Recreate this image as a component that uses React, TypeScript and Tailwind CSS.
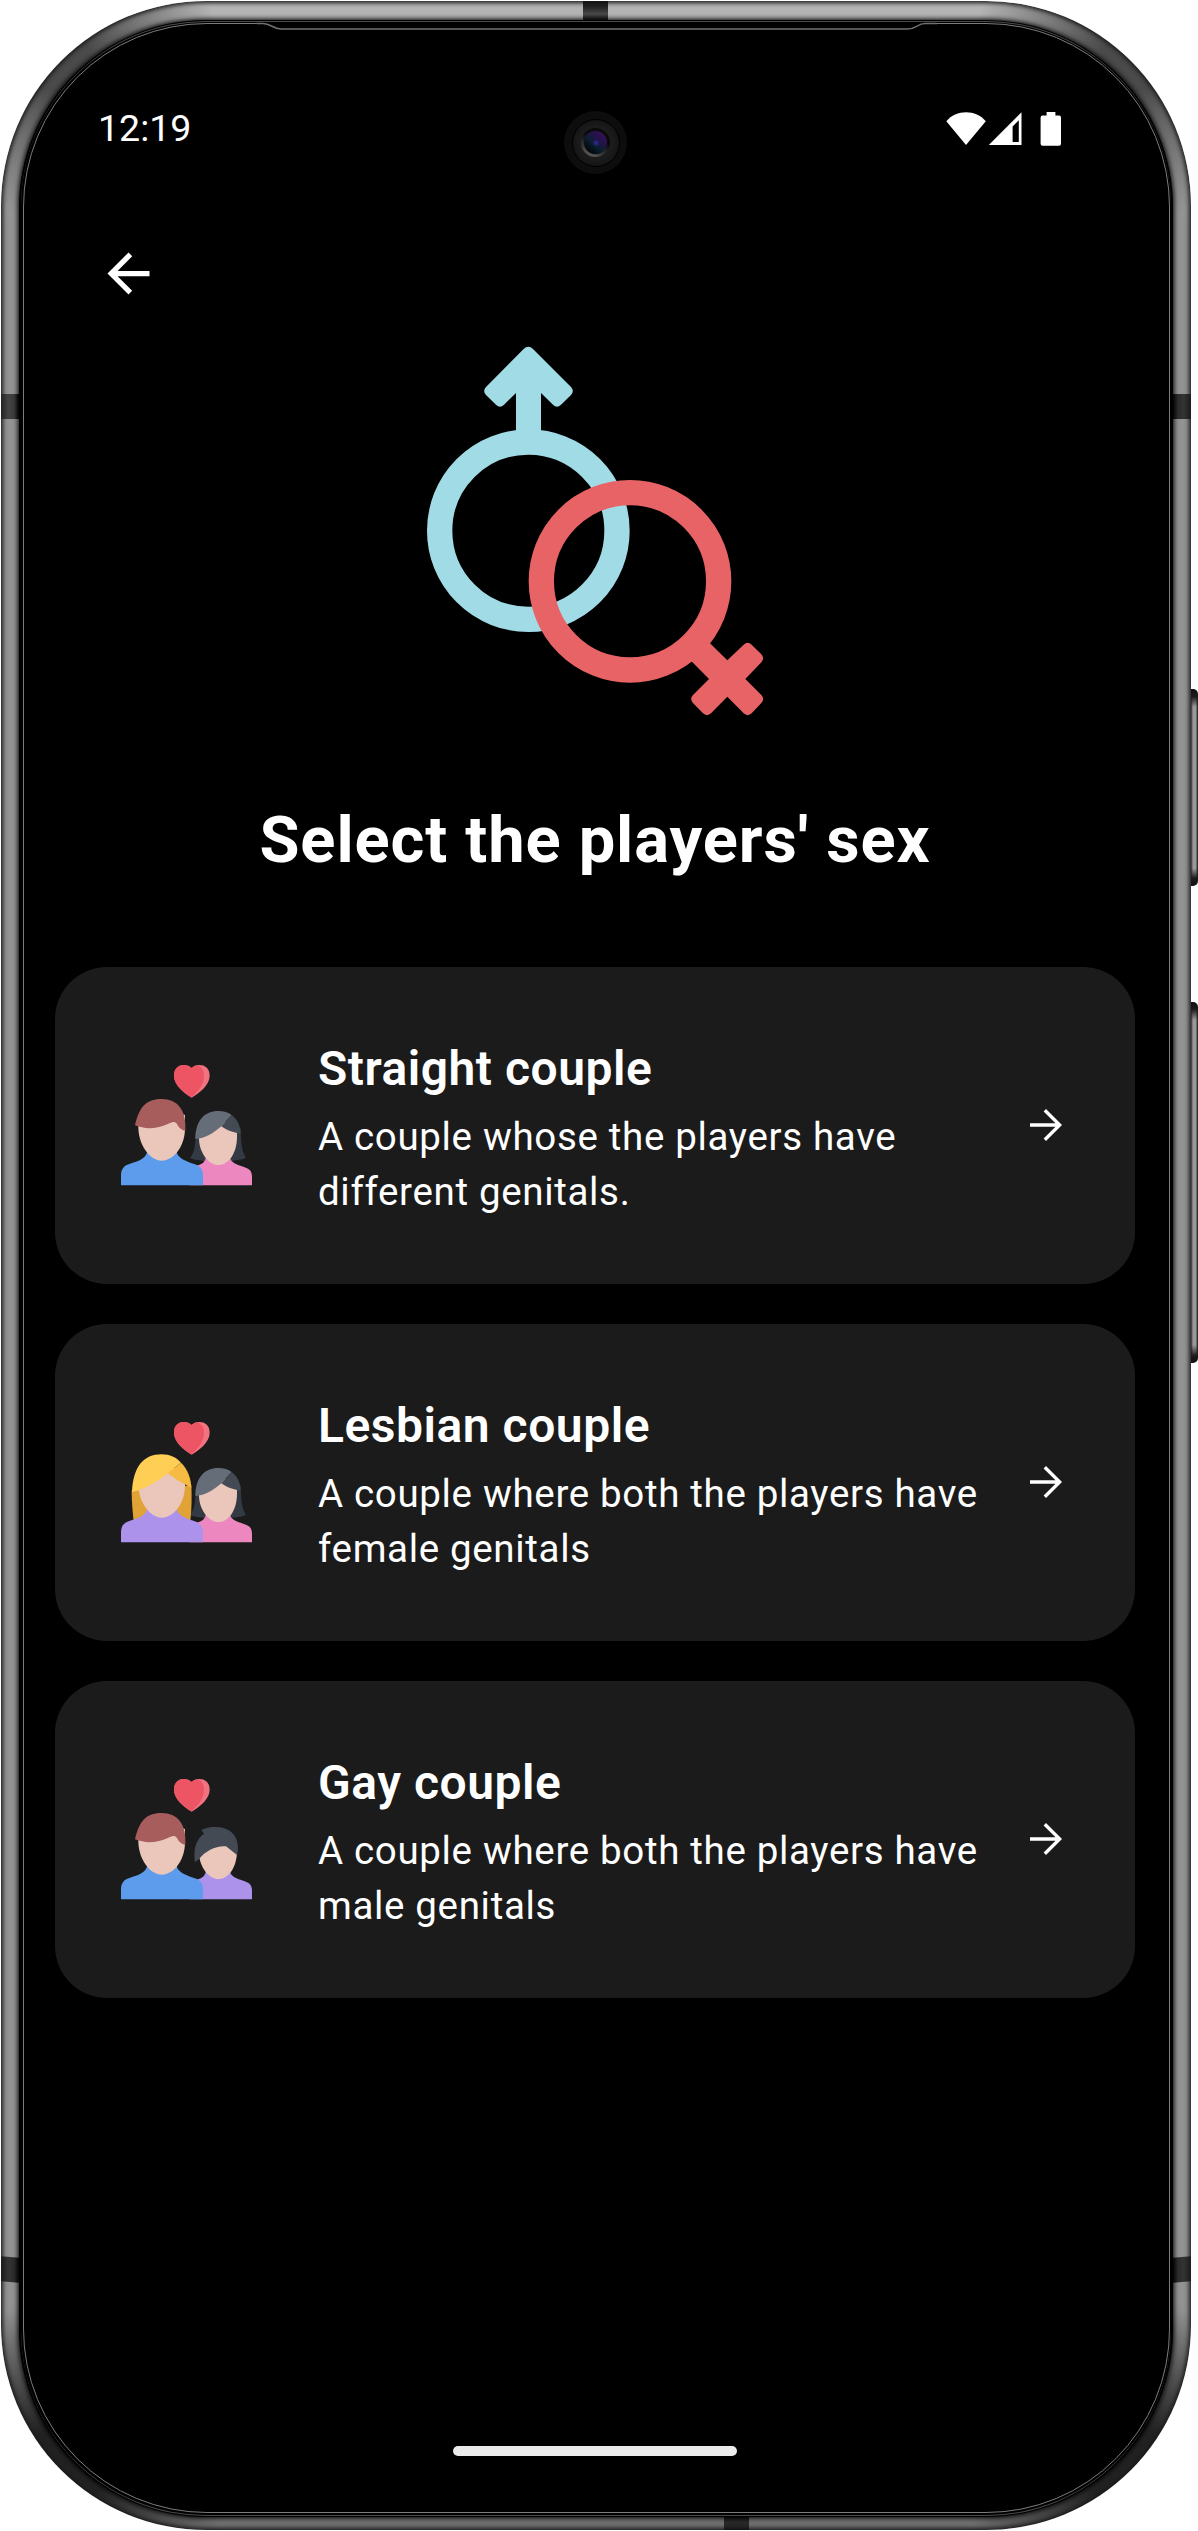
type Couple = 'straight' | 'lesbian' | 'gay';

const options: { kind: Couple; title: string; lines: [string, string] }[] = [
  { kind: 'straight', title: 'Straight couple', lines: ['A couple whose the players have', 'different genitals.'] },
  { kind: 'lesbian', title: 'Lesbian couple', lines: ['A couple where both the players have', 'female genitals'] },
  { kind: 'gay', title: 'Gay couple', lines: ['A couple where both the players have', 'male genitals'] },
];

function CoupleIcon({ kind }: { kind: Couple }) {
  const frontBody = kind === 'lesbian' ? '#ac92eb' : '#5d9cec';
  const backBody = kind === 'gay' ? '#ac92eb' : '#ec87c0';
  return (
    <svg viewBox="93 60 393 393" className="h-[131px] w-[131px] shrink-0">
      {kind !== 'gay' && (
        <path d="M317 275C317 320 312 340 300 354C325 368 440 368 468 353C456 338 453 310 452 265Z" fill="#333a43" />
      )}
      <path d="M300 436V376H325C341 370 348 362 348 345H420V352C422 368 440 374 462 381C478 386 486 393 486 410V436Z" fill={backBody} />
      <path d="M327 290C325 335 355 375 385 375C415 375 441 340 441 290V265L394 240L335 270Z" fill="#eac6bb" />
      {kind === 'gay' ? (
        <path d="M315 325C310 290 315 258 342 239L334 228C350 220 362 219 375 219C420 219 444 243 444 283L442 304L408 277C380 274 345 291 328 314Z" fill="#434a54" />
      ) : (
        <>
          <path d="M316 297C316 240 345 213 384 213C402 213 415 217 425 225L394 259C370 280 345 295 316 297Z" fill="#656d78" />
          <path d="M425 225C445 240 451 260 452 281C430 278 408 270 394 259Z" fill="#434a54" />
        </>
      )}
      {kind === 'lesbian' && <path d="M125 280C125 315 128 350 132 380H300C304 350 306 310 304 265Z" fill="#e2a336" />}
      <path d="M93 436V407C93 385 103 376 120 371C150 362 170 352 171 335H260C262 352 285 363 310 371C330 377 339 387 339 407V436Z" fill={frontBody} />
      <path d="M145 255C143 315 180 362 215 362C252 362 285 318 285 265V225L215 200L150 235Z" fill="#eac6bb" />
      {kind === 'lesbian' ? (
        <>
          <path d="M126 285C130 209 160 172 215 172C240 172 258 181 273 197L233 229C205 252 165 277 126 285Z" fill="#ffce54" />
          <path d="M273 197C293 216 303 244 304 272C280 261 255 246 233 229Z" fill="#f6bb42" />
        </>
      ) : (
        <path d="M135 256C147 205 165 177 215 177C262 177 291 210 286 273C275 270 265 263 261 252C253 240 243 248 228 254C198 267 165 268 135 256Z" fill="#a85d5d" />
      )}
      <path d="M305 173C325 160 359 137 359 107C359 72 322 68 305 84C288 68 252 72 252 107C252 137 285 160 305 173Z" fill="#f27380" />
      <path d="M303 172C322 158 342 135 342 105C342 90 334 80 320 76C314 77 309 80 305 84C288 68 252 72 252 107C252 137 285 160 303 172Z" fill="#ed5564" />
    </svg>
  );
}

function SexSymbols() {
  return (
    <svg viewBox="0 0 1200 1260" className="h-[420px] w-[400px] self-start">
      <g fill="#a1dce6">
        <path d="M371 87Q385 74 399 87L513 201Q524 213 513 225L483 254Q471 266 459 254L423 219V345H348V219L312 254Q300 266 288 254L258 225Q247 213 258 201Z" />
        <circle cx="385" cy="632" r="266" fill="none" stroke="#a1dce6" strokeWidth="76" />
      </g>
      <g fill="#e86365">
        <circle cx="690" cy="784" r="266" fill="none" stroke="#e86365" strokeWidth="76" />
        <path d="M930 970L982 1021L1031 974Q1043 963 1055 974L1084 1003Q1095 1015 1084 1027L1036 1077L1084 1125Q1095 1137 1084 1149L1055 1180Q1043 1191 1031 1180L982 1130L933 1180Q921 1191 909 1180L879 1149Q868 1137 879 1125L927 1077L870 1019L895 960Z" />
      </g>
    </svg>
  );
}

function StatusIcons() {
  return (
    <svg viewBox="948 111 116 36" className="h-[36px] w-[116px]" fill="#fff">
      <path d="M948.3 121.2C958 109.2 978 109.2 987.8 121.2L968 145Z" />
      <path fillRule="evenodd" d="M990.8 145L1023.5 112.3V145ZM1014.6 126.5V142H1020.8V120.3Z" />
      <path d="M1048.6 112H1057.4V115.5H1061Q1063 115.5 1063 117.5V143.7Q1063 145.7 1061 145.7H1044.6Q1042.6 145.7 1042.6 143.7V117.5Q1042.6 115.5 1044.6 115.5H1048.6Z" />
    </svg>
  );
}

function Camera() {
  return (
    <div className="absolute left-[563px] top-[110px] flex h-[63px] w-[63px] items-center justify-center rounded-full bg-[#0d0d0d]">
      <div className="flex h-[48px] w-[48px] items-center justify-center rounded-full border border-black bg-[radial-gradient(circle,#1c1c1c_50%,#0c0c0c_100%)]">
        <div className="flex h-[29px] w-[29px] items-center justify-center rounded-full bg-[linear-gradient(25deg,#777_0%,#333_30%,#0a0a0a_60%)]">
          <div className="flex h-[23px] w-[23px] items-center justify-center rounded-full bg-[linear-gradient(40deg,#020608_15%,#0c1f33_45%,#2b1050_70%,#3a1452_100%)]">
            <div className="h-[4px] w-[4px] rounded-full bg-[#3b2fb5] blur-[1px]" />
          </div>
        </div>
      </div>
    </div>
  );
}

function Bezel() {
  return (
    <>
      <div className="absolute left-0 top-[393px] h-[25px] w-[18px] bg-[linear-gradient(90deg,#222,#444_40%,#3a3a3a_75%,#111)]" />
      <div className="absolute right-0 top-[393px] h-[25px] w-[18px] bg-[linear-gradient(270deg,#1a1a1a,#333_40%,#2c2c2c_75%,#111)]" />
      <div className="absolute left-0 top-[2256px] h-[25px] w-[18px] skew-y-[4deg] bg-[linear-gradient(90deg,#1a1a1a,#333_40%,#2c2c2c_75%,#111)]" />
      <div className="absolute right-0 top-[2256px] h-[25px] w-[18px] -skew-y-[4deg] bg-[linear-gradient(270deg,#1a1a1a,#333_40%,#2c2c2c_75%,#111)]" />
      <div className="absolute left-[582px] top-0 h-[20px] w-[25px] bg-[linear-gradient(180deg,#111,#222_30%,#4a4a4a_65%,#151515)]" />
      <div className="absolute bottom-0 left-[723px] h-[16px] w-[25px] bg-[linear-gradient(180deg,#0a0a0a,#2a2a2a_50%,#222_80%,#111)]" />
      <div className="absolute inset-x-[18px] bottom-[13px] top-[19px] rounded-[187px] bg-black shadow-[0_0_5px_1px_#000]" />
      <div className="absolute inset-x-[20px] bottom-[14px] top-[20px] rounded-[185px] border-y border-[#4a4a4a]" />
      <div className="absolute bottom-[17px] left-[22px] right-[21px] top-[22px] rounded-[184px] border border-[#7c7c7c]" />
      <svg viewBox="0 0 680 10" className="absolute left-[256px] top-[21px] h-[10px] w-[680px]" fill="none">
        <path d="M8 0H670V4H8Z" fill="#000" />
        <path d="M0 1.5H6C14 1.5 16 7 24 7H650C660 7 660 1.5 668 1.5H680" stroke="#707070" strokeWidth="1.5" />
      </svg>
    </>
  );
}

export default function App() {
  return (
    <div className="relative h-[2531px] w-[1198px] overflow-hidden bg-white p-px font-['Roboto',sans-serif] text-white">
      <div className="absolute left-[1189px] top-[689px] h-[197px] w-[8.5px] rounded-r-[5px] bg-[linear-gradient(180deg,#111_0%,#1c1c1c_4%,transparent_9%,transparent_91%,#1c1c1c_96%,#111_100%),linear-gradient(90deg,#222_20%,#999_45%,#999_75%,#111_100%)]" />
      <div className="absolute left-[1189px] top-[1002px] h-[361px] w-[8.5px] rounded-r-[5px] bg-[linear-gradient(180deg,#111_0%,#1c1c1c_2%,transparent_5%,transparent_95%,#1c1c1c_98%,#111_100%),linear-gradient(90deg,#222_20%,#999_45%,#999_75%,#111_100%)]" />
      <div className="relative h-[2529px] w-[1190px] rounded-[205px] bg-[radial-gradient(circle_at_60px_60px,#4a4a4a_0px,#4a4a4a_30px,transparent_160px),radial-gradient(circle_at_1130px_60px,#4a4a4a_0px,#4a4a4a_30px,transparent_160px),radial-gradient(circle_at_65px_2464px,#222_0px,#222_40px,transparent_165px),radial-gradient(circle_at_1125px_2464px,#222_0px,#222_40px,transparent_165px),linear-gradient(180deg,#b4b4b4_0px,#b4b4b4_30px,#929292_220px,#929292_2300px,#707070_2500px)] shadow-[inset_0_0_4px_2px_#1a1a1a]">
        <Bezel />
        <Camera />
        <div className="relative flex h-full flex-col px-[54px]">
          <header className="mt-[98px] flex h-[60px] items-center justify-between pl-[43px] pr-[75px]">
            <span className="pb-[2px] text-[37.5px] leading-[44px]">12:19</span>
            <StatusIcons />
          </header>
          <button className="ml-[42px] mt-[83px] h-[63px] w-[63px]" aria-label="Back">
            <svg viewBox="0 0 24 24" fill="#fff" className="h-full w-full">
              <path d="M20 11H7.83l5.59-5.59L12 4l-8 8 8 8 1.41-1.41L7.83 13H20v-2z" />
            </svg>
          </button>
          <div className="ml-[345px] mt-[15px] h-[420px]">
            <SexSymbols />
          </div>
          <h1 className="mt-[64px] pr-[2px] text-center text-[65px] font-bold leading-[72px] tracking-[0.92px]">Select the players' sex</h1>
          <main className="mt-[91px] flex flex-col gap-[40px]">
            {options.map((o) => (
              <button key={o.kind} className="flex h-[317px] w-[1080px] items-center rounded-[52px] bg-[#1b1b1b] pl-[66px] pr-[65px] text-left">
                <CoupleIcon kind={o.kind} />
                <span className="ml-[66px] flex w-0 flex-1 flex-col pt-[4px]">
                  <span className="text-[48px] font-semibold leading-[66px] tracking-[0.52px]">{o.title}</span>
                  <span className="mt-[7px] whitespace-nowrap text-[38.5px] leading-[55px] tracking-[0.66px]">
                    {o.lines[0]}
                    <br />
                    {o.lines[1]}
                  </span>
                </span>
                <svg viewBox="0 0 24 24" fill="#fff" className="mb-[2px] h-[48px] w-[48px] shrink-0">
                  <path d="M12 4l-1.2 1.2 5.95 5.95H4v1.7h12.75L10.8 18.8 12 20l8-8z" />
                </svg>
              </button>
            ))}
          </main>
          <div className="absolute bottom-[74px] left-[452px] h-[10px] w-[284px] rounded-full bg-[#ebebeb]" />
        </div>
      </div>
    </div>
  );
}
